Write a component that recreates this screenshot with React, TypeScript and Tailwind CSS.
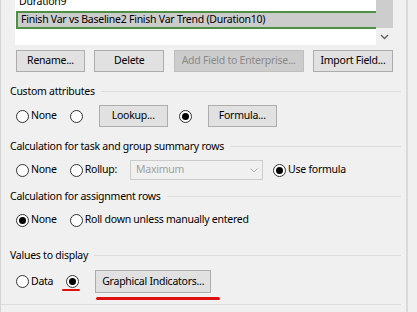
import React from 'react'

const font = { fontFamily: '"Noto Sans", "Open Sans", sans-serif', letterSpacing: '-0.25px' }

const Radio = ({ checked = false }: { checked?: boolean }) => (
    <span className="w-[13px] h-[13px] rounded-full border border-[#333] bg-white flex items-center justify-center shrink-0">
        {checked && <span className="w-[7px] h-[7px] rounded-full bg-black" />}
    </span>
)

const Btn = ({ label, className = '', disabled = false }: { label: string; className?: string; disabled?: boolean }) => (
    <div
        className={`h-[22px] flex items-center justify-center border whitespace-nowrap text-[10.5px] ${disabled
                ? 'bg-[#cccccc] border-[#bfbfbf] text-[#8a8a8a]'
                : 'bg-[#e1e1e1] border-[#adadad] text-black'
            } ${className}`}
    >
        {label}
    </div>
)

const GroupLabel = ({ text, className = '' }: { text: string; className?: string }) => (
    <div className={`h-4 flex items-center pl-[9px] pr-[5px] ${className}`}>
        <span className="text-[10.5px] text-black whitespace-nowrap">{text}</span>
        <div className="flex-1 h-px bg-[#dcdcdc] ml-[6px] -mt-[2px]" />
    </div>
)

const App = () => {
    return (
        <div className="w-[417px] h-[312px] overflow-hidden bg-[#f0f0f0] flex" style={font}>
            <div className="w-[406px] h-full border-l border-[#d4d4d4] relative">
                {/* field list */}
                <div className="ml-[14px] w-[378px] h-[52px] -mt-[7px] bg-white flex">
                    <div className="flex-1 flex flex-col">
                        <div className="h-[18px] flex items-center pl-[4px] text-[10.5px] text-black">Duration9</div>
                        <div className="h-[18px] flex items-center pl-[3px] text-[10.5px] text-black bg-[#cccccc] border-y-2 border-l-2 border-[#4e9142] ml-px whitespace-nowrap">
                            Finish Var vs Baseline2 Finish Var Trend (Duration10)
                        </div>
                    </div>
                    <div className="w-[17px] bg-[#f0f0f0] flex flex-col">
                        <div className="h-[35px] bg-[#cdcdcd]" />
                        <div className="flex-1 flex items-center justify-center">
                            <svg width="9" height="6" viewBox="0 0 9 6" fill="none">
                                <path d="M1 1l3.5 3.5L8 1" stroke="#606060" strokeWidth="1.4" />
                            </svg>
                        </div>
                    </div>
                </div>

                <div className="flex justify-between ml-[15px] w-[377px] mt-[5px]">
                    <Btn label="Rename..." className="w-[69px]" />
                    <Btn label="Delete" className="w-[70px]" />
                    <Btn label="Add Field to Enterprise..." className="w-[130px]" disabled />
                    <Btn label="Import Field..." className="w-[80px]" />
                </div>

                <GroupLabel text="Custom attributes" className="mt-[12px]" />
                <div className="h-[22px] flex items-center mt-[5px] text-[10.5px] text-black">
                    <div className="ml-[15px]"><Radio /></div>
                    <span className="ml-[2px]">None</span>
                    <div className="ml-[13px]"><Radio /></div>
                    <Btn label="Lookup..." className="w-[69px] ml-[16px]" />
                    <div className="ml-[11px]"><Radio checked /></div>
                    <Btn label="Formula..." className="w-[69px] ml-[16px]" />
                </div>

                <GroupLabel text="Calculation for task and group summary rows" className="mt-[12px]" />
                <div className="h-[22px] flex items-center mt-[4px] text-[10.5px] text-black">
                    <div className="ml-[15px]"><Radio /></div>
                    <span className="ml-[2px]">None</span>
                    <div className="ml-[13px]"><Radio /></div>
                    <span className="ml-[2px]">Rollup:</span>
                    <div className="ml-[13px] w-[133px] h-[20px] border border-[#cccccc] bg-[#f0f0f0] flex items-center">
                        <span className="flex-1 pl-[5px] text-[#a0a0a0]">Maximum</span>
                        <div className="w-[17px] h-full flex items-center justify-center">
                            <svg width="8" height="5" viewBox="0 0 8 5" fill="none">
                                <path d="M0.5 0.5L4 4l3.5-3.5" stroke="#b0b0b0" strokeWidth="1" />
                            </svg>
                        </div>
                    </div>
                    <div className="ml-[10px]"><Radio checked /></div>
                    <span className="ml-[2px]">Use formula</span>
                </div>

                <GroupLabel text="Calculation for assignment rows" className="mt-[8px]" />
                <div className="h-[22px] flex items-center mt-[4px] text-[10.5px] text-black">
                    <div className="ml-[15px]"><Radio checked /></div>
                    <span className="ml-[2px]">None</span>
                    <div className="ml-[13px]"><Radio /></div>
                    <span className="ml-[2px]">Roll down unless manually entered</span>
                </div>

                <GroupLabel text="Values to display" className="mt-[17px]" />
                <div className="h-[23px] flex items-center mt-[6px] text-[10.5px] text-black relative">
                    <div className="ml-[15px]"><Radio /></div>
                    <span className="ml-[2px]">Data</span>
                    <div className="ml-[13px]"><Radio checked /></div>
                    <Btn label="Graphical Indicators..." className="w-[116px] h-[23px] ml-[16px]" />
                    <div className="absolute left-[61px] top-[19px] w-[18px] h-[2px] rounded-full bg-[#e01010]" />
                    <div className="absolute left-[95px] top-[27px] w-[124px] h-[3px] rounded-full bg-[#e01010]" />
                </div>

                <div className="mt-[11px] h-px bg-[#dcdcdc] mr-[5px]" />
            </div>
            <div className="w-[2px] h-full bg-[#dadada]" />
            <div className="flex-1 h-full bg-[#f0f0f0]" />
        </div>
    )
}

export default App
